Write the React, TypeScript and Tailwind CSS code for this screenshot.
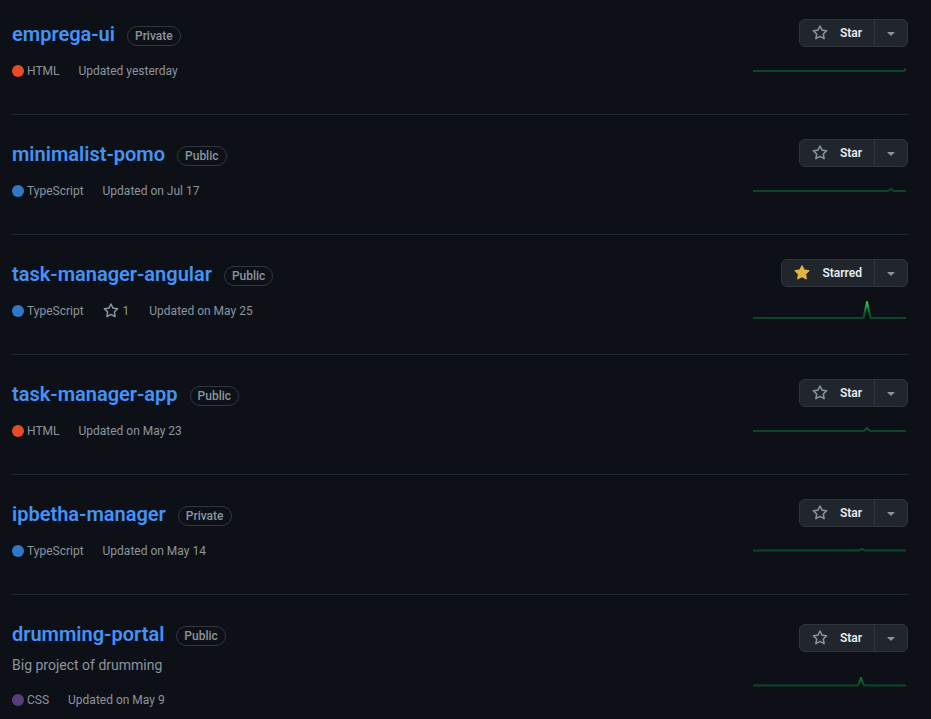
import React from 'react';

type Bump = { x: number; h: number; w: number };

type Repo = {
  name: string;
  visibility: 'Public' | 'Private';
  description?: string;
  lang: string;
  color: string;
  stars?: number;
  updated: string;
  starred?: boolean;
  base: number;
  bumps: Bump[];
};

const repos: Repo[] = [
  { name: 'emprega-ui', visibility: 'Private', lang: 'HTML', color: '#e34c26', updated: 'Updated yesterday', base: 21, bumps: [{ x: 153, h: 2, w: 2 }] },
  { name: 'minimalist-pomo', visibility: 'Public', lang: 'TypeScript', color: '#3178c6', updated: 'Updated on Jul 17', base: 21, bumps: [{ x: 138, h: 2, w: 3 }] },
  { name: 'task-manager-angular', visibility: 'Public', lang: 'TypeScript', color: '#3178c6', stars: 1, updated: 'Updated on May 25', starred: true, base: 28, bumps: [{ x: 114, h: 16, w: 3.5 }] },
  { name: 'task-manager-app', visibility: 'Public', lang: 'HTML', color: '#e34c26', updated: 'Updated on May 23', base: 21, bumps: [{ x: 114, h: 3, w: 3 }] },
  { name: 'ipbetha-manager', visibility: 'Private', lang: 'TypeScript', color: '#3178c6', updated: 'Updated on May 14', base: 20.5, bumps: [{ x: 109, h: 1.5, w: 3 }] },
  { name: 'drumming-portal', visibility: 'Public', description: 'Big project of drumming', lang: 'CSS', color: '#563d7c', updated: 'Updated on May 9', base: 21.5, bumps: [{ x: 108, h: 7.5, w: 3 }] },
];

function StarIcon({ filled }: { filled?: boolean }) {
  if (filled) {
    return (
      <svg width="16" height="16" viewBox="0 0 16 16" fill="#e3b341">
        <path d="M8 .25a.75.75 0 0 1 .673.418l1.882 3.815 4.21.612a.75.75 0 0 1 .416 1.279l-3.046 2.97.719 4.192a.751.751 0 0 1-1.088.791L8 12.347l-3.766 1.98a.75.75 0 0 1-1.088-.79l.72-4.194L.818 6.374a.75.75 0 0 1 .416-1.28l4.21-.611L7.327.668A.75.75 0 0 1 8 .25Z" />
      </svg>
    );
  }
  return (
    <svg width="16" height="16" viewBox="0 0 16 16" fill="#8b949e">
      <path d="M8 .25a.75.75 0 0 1 .673.418l1.882 3.815 4.21.612a.75.75 0 0 1 .416 1.279l-3.046 2.97.719 4.192a.751.751 0 0 1-1.088.791L8 12.347l-3.766 1.98a.75.75 0 0 1-1.088-.79l.72-4.194L.818 6.374a.75.75 0 0 1 .416-1.28l4.21-.611L7.327.668A.75.75 0 0 1 8 .25Zm0 2.445L6.615 5.5a.75.75 0 0 1-.564.41l-3.097.45 2.24 2.184a.75.75 0 0 1 .216.664l-.528 3.084 2.769-1.456a.75.75 0 0 1 .698 0l2.77 1.456-.53-3.084a.75.75 0 0 1 .216-.664l2.24-2.183-3.096-.45a.75.75 0 0 1-.564-.41L8 2.694Z" />
    </svg>
  );
}

function Sparkline({ base, bumps, id }: { base: number; bumps: Bump[]; id: string }) {
  let d = `M0 ${base}`;
  bumps.forEach((b) => {
    d += ` L${b.x - b.w} ${base} L${b.x} ${base - b.h}`;
    if (b.x < 153) d += ` L${b.x + b.w} ${base}`;
  });
  if (bumps[bumps.length - 1].x < 153) d += ` L153 ${base}`;
  return (
    <svg width="155" height="39" viewBox="0 0 155 39" className="block">
      <defs>
        <linearGradient id={id} gradientUnits="userSpaceOnUse" x1="0" x2="0" y1={base} y2={base - 18}>
          <stop offset="0%" stopColor="#0e4429" />
          <stop offset="33%" stopColor="#006d32" />
          <stop offset="66%" stopColor="#26a641" />
          <stop offset="100%" stopColor="#39d353" />
        </linearGradient>
      </defs>
      <path d={d} fill="none" stroke={`url(#${id})`} strokeWidth="2" strokeLinejoin="round" />
    </svg>
  );
}

function StarButton({ starred }: { starred?: boolean }) {
  return (
    <div className="-mt-px flex h-7 rounded-md border border-[#30363d] bg-[#21262d] text-xs font-semibold text-[#e6edf3]">
      <div className="flex items-center gap-3 border-r border-[#30363d] px-3">
        <StarIcon filled={starred} />
        <span>{starred ? 'Starred' : 'Star'}</span>
      </div>
      <div className="flex w-8 items-center justify-center">
        <svg width="16" height="16" viewBox="0 0 16 16" fill="#8b949e">
          <path d="m4.427 7.427 3.396 3.396a.25.25 0 0 0 .354 0l3.396-3.396A.25.25 0 0 0 11.396 7H4.604a.25.25 0 0 0-.177.427Z" />
        </svg>
      </div>
    </div>
  );
}

export default function App() {
  return (
    <div className="min-h-screen overflow-hidden bg-[#0d1117] font-['Roboto',sans-serif]">
      <ul className="-mt-[5px] ml-3 w-[896px]">
        {repos.map((r, i) => (
          <li key={r.name} className="flex min-h-[120px] justify-between border-b border-[#21262d] py-6">
            <div className="flex-1">
              <div className="flex items-center">
                <h3 className="text-xl font-semibold leading-[30px] text-[#4493f8]">{r.name}</h3>
                <span className="ml-3 mt-1 rounded-full border border-[#30363d] px-[7px] text-xs font-medium leading-[18px] text-[#8b949e]">
                  {r.visibility}
                </span>
              </div>
              {r.description && (
                <p className="mt-1.5 text-sm leading-[21px] text-[#8b949e]">{r.description}</p>
              )}
              <div className={`${r.description ? 'mt-[15px]' : 'mt-[13px]'} flex items-center text-xs leading-[18px] text-[#8b949e]`}>
                <span className="mr-[19px] flex items-center gap-[3px]">
                  <span className="h-3 w-3 rounded-full" style={{ backgroundColor: r.color }} />
                  <span>{r.lang}</span>
                </span>
                {r.stars !== undefined && (
                  <span className="mr-5 flex items-center gap-1">
                    <StarIcon />
                    <span>{r.stars}</span>
                  </span>
                )}
                <span>{r.updated}</span>
              </div>
            </div>
            <div className="ml-3 flex flex-none flex-col items-end justify-around">
              <StarButton starred={r.starred} />
              <Sparkline base={r.base} bumps={r.bumps} id={`spark-${i}`} />
            </div>
          </li>
        ))}
      </ul>
    </div>
  );
}
